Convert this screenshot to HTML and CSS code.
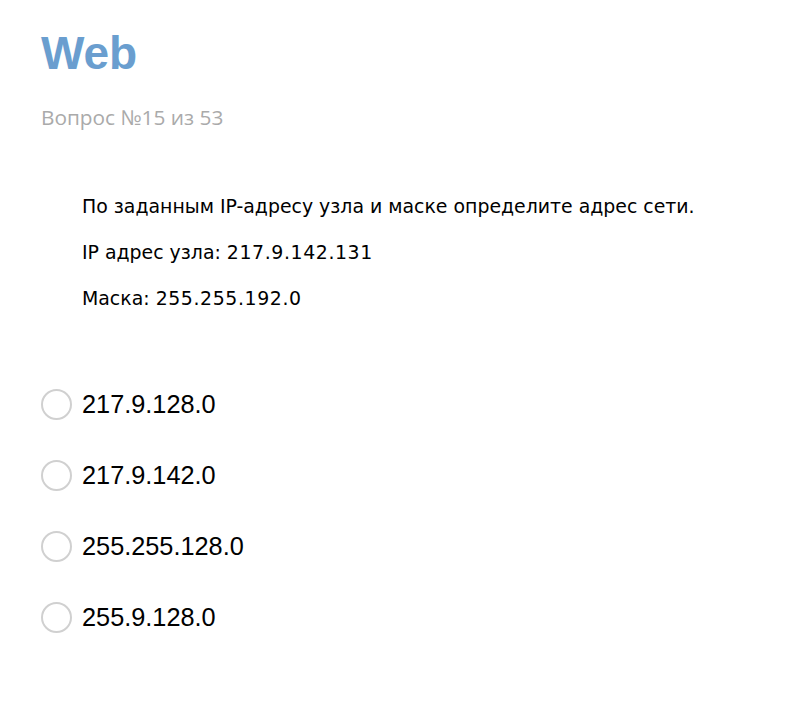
FILE: index.html
```html
<!DOCTYPE html>
<html lang="ru">
<head>
<meta charset="utf-8">
<link rel="stylesheet" href="styles.css">
</head>
<body>
<div class="page">
  <h1 class="title">Web</h1>
  <div class="counter">Вопрос №15 из 53</div>
  <div class="question">
    <p>По заданным IP-адресу узла и маске определите адрес сети.</p>
    <p>IP адрес узла: <span class="num">217.9.142.131</span></p>
    <p>Маска: <span class="num">255.255.192.0</span></p>
  </div>
  <ul class="options">
    <li class="option"><span class="radio"></span><span class="label">217.9.128.0</span></li>
    <li class="option"><span class="radio"></span><span class="label">217.9.142.0</span></li>
    <li class="option"><span class="radio"></span><span class="label">255.255.128.0</span></li>
    <li class="option"><span class="radio"></span><span class="label">255.9.128.0</span></li>
  </ul>
</div>
</body>
</html>
```
FILE: styles.css
```css
html, body {
  margin: 0;
  padding: 0;
  background: #fff;
}
.page {
  padding: 28px 0 0 41px;
}
.title {
  margin: 0;
  font-family: "Liberation Sans", Arial, sans-serif;
  font-weight: bold;
  font-size: 46px;
  line-height: 50px;
  color: #6a9ecf;
  letter-spacing: -0.1px;
}
.counter {
  margin-top: 25px;
  font-family: "Open Sans", sans-serif;
  font-size: 20.8px;
  line-height: 28px;
  color: #aaaaaa;
}
.question {
  margin-top: 64px;
  padding-left: 41px;
  font-family: "DejaVu Sans", Verdana, sans-serif;
  font-size: 18.9px;
  color: #000;
}
.question p {
  margin: 0 0 23px 0;
  line-height: 23px;
}
.question p:last-child {
  margin-bottom: 0;
}
.num {
  letter-spacing: 0.6px;
}
.options {
  list-style: none;
  margin: 78px 0 0 0;
  padding: 0;
}
.option {
  display: flex;
  align-items: center;
  gap: 10px;
  height: 32px;
  margin-bottom: 39px;
}
.radio {
  box-sizing: border-box;
  width: 31px;
  height: 31px;
  border: 2px solid #d0d0d0;
  border-radius: 50%;
  background: #fff;
  flex: none;
}
.label {
  font-family: "Liberation Sans", Arial, sans-serif;
  font-size: 25.3px;
  color: #000;
}
```
